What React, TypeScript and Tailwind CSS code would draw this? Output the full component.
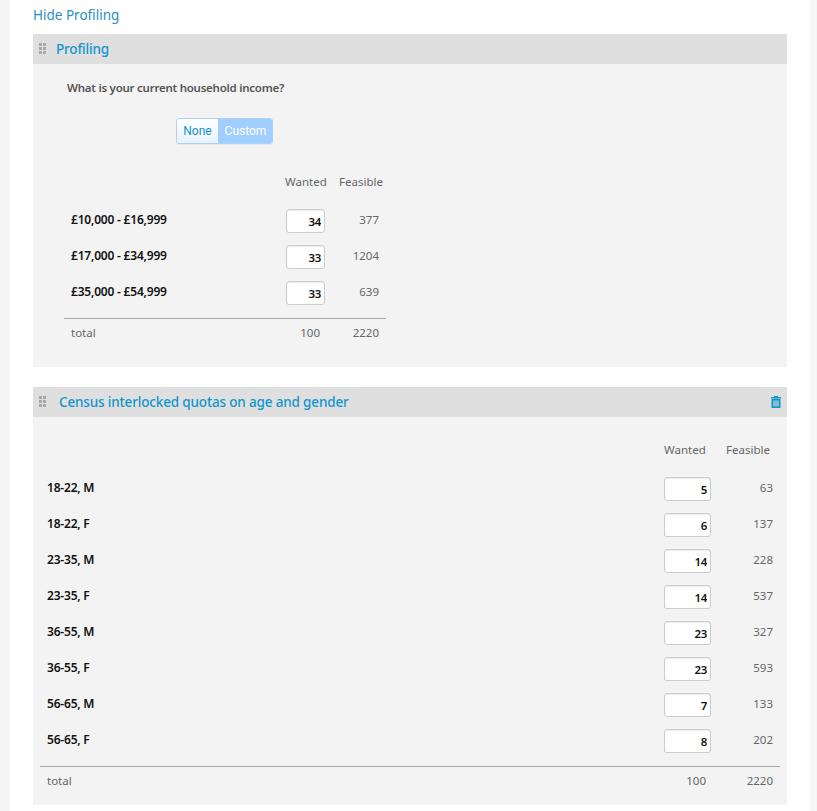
const font = { fontFamily: '"Noto Sans", sans-serif' };

function DragHandle() {
  return (
    <svg width="7" height="11" viewBox="0 0 7 11" className="shrink-0 self-start mt-[9px]">
      {[0, 4, 8].map((y) =>
        [0, 4].map((x) => <rect key={`${x}-${y}`} x={x} y={y} width="3" height="3" fill="#a8a8a4" />)
      )}
    </svg>
  );
}

function Trash() {
  return (
    <svg width="10" height="12" viewBox="0 0 10 12">
      <path d="M3 1V0h4v1h3v1.5H0V1z" fill="#0d96cf" />
      <path d="M.5 3h9v9h-9z" fill="#0d96cf" />
      <rect x="2" y="4.5" width="6" height="6" fill="#86b9d4" />
    </svg>
  );
}

function Row({ label, value, feasible, inputW, feasibleW }: { label: string; value: number; feasible: number; inputW: string; feasibleW: string }) {
  return (
    <div className="flex items-center h-9">
      <div className="flex-1 text-[12px] font-semibold tracking-[-0.2px] text-[#111] -mt-0.5">{label}</div>
      <input
        readOnly
        value={value}
        className={`${inputW} h-6 rounded-[3px] border border-[#ccc] bg-white text-right pr-[3px] text-[11.5px] font-semibold tracking-[-0.3px] text-[#111] shadow-[inset_0_1px_1px_rgba(0,0,0,0.08)] outline-none`}
      />
      <div className={`${feasibleW} text-right text-[11.5px] text-[#666] -mt-0.5`}>{feasible}</div>
    </div>
  );
}

const income = [
  ["£10,000 - £16,999", 34, 377],
  ["£17,000 - £34,999", 33, 1204],
  ["£35,000 - £54,999", 33, 639],
] as const;

const census = [
  ["18-22, M", 5, 63],
  ["18-22, F", 6, 137],
  ["23-35, M", 14, 228],
  ["23-35, F", 14, 537],
  ["36-55, M", 23, 327],
  ["36-55, F", 23, 593],
  ["56-65, M", 7, 133],
  ["56-65, F", 8, 202],
] as const;

export default function App() {
  return (
    <div className="h-[811px] overflow-hidden bg-[#f5f5f5] pl-2.5 pr-[7px]" style={font}>
      <div className="h-full bg-white px-[23px]">
        <div className="h-[34px] pt-[6px] text-[13.5px] leading-[19px] text-[#2a8fc4]">Hide Profiling</div>

        <section className="bg-[#f3f3f3] h-[333px]">
          <header className="flex items-center h-[30px] bg-[#dfdfdf] pl-[6px]">
            <DragHandle />
            <span className="ml-[10px] text-[13.5px] font-medium tracking-[-0.16px] text-[#1295cc]">Profiling</span>
          </header>
          <div className="pl-[31px] pt-[15px]">
            <p className="pl-[3px] h-[18px] text-[11.5px] leading-[18px] font-semibold tracking-[-0.25px] text-[#555]">What is your current household income?</p>
            <div className="ml-[112px] mt-[21px] flex w-[97px] h-[26px] rounded-[3px] overflow-hidden border border-[#a6d2fb] text-[12px] shadow-[0_1px_1px_rgba(0,0,0,0.05)]" style={{ fontFamily: 'Roboto, sans-serif' }}>
              <span className="flex w-[41px] items-center justify-center bg-gradient-to-b from-white to-[#e9f3fb] text-[#1295cc]">None</span>
              <span className="flex flex-1 items-center justify-center bg-[#9fceff] pl-px text-white">Custom</span>
            </div>
            <div className="w-[322px] mt-[29px]">
              <div className="flex h-[18px] items-center text-[11.5px] text-[#666]">
                <span className="ml-[221px] w-[43px]">Wanted</span>
                <span className="ml-[11px]">Feasible</span>
              </div>
              <div className="mt-3 pl-[7px] pr-[7px]">
                {income.map(([l, v, f]) => (
                  <Row key={l} label={l} value={v} feasible={f} inputW="w-[39px]" feasibleW="w-[54px]" />
                ))}
              </div>
              <div className="border-t border-[#a5a5a5] mt-[7px] flex items-center h-[29px] px-[7px] text-[11.5px] text-[#666]">
                <span className="flex-1">total</span>
                <span>100</span>
                <span className="w-[59px] text-right">2220</span>
              </div>
            </div>
          </div>
        </section>

        <section className="mt-5 bg-[#f3f3f3] h-[418px]">
          <header className="flex items-center h-[30px] bg-[#dfdfdf] pl-[6px] pr-[6px]">
            <DragHandle />
            <span className="ml-[13px] flex-1 text-[13.5px] font-medium tracking-[-0.16px] text-[#1295cc]">Census interlocked quotas on age and gender</span>
            <Trash />
          </header>
          <div className="px-[7px]">
            <div className="flex h-[18px] mt-6 items-center text-[11.5px] text-[#666]">
              <span className="ml-[624px] w-[62px]">Wanted</span>
              <span>Feasible</span>
            </div>
            <div className="mt-3 pl-[7px] pr-[7px]">
              {census.map(([l, v, f]) => (
                <Row key={l} label={l} value={v} feasible={f} inputW="w-[47px]" feasibleW="w-[62px]" />
              ))}
            </div>
            <div className="border-t border-[#a5a5a5] mt-[7px] flex items-center h-[29px] px-[7px] text-[11.5px] text-[#666]">
              <span className="flex-1">total</span>
              <span>100</span>
              <span className="w-[67px] text-right">2220</span>
            </div>
          </div>
        </section>
      </div>
    </div>
  );
}
